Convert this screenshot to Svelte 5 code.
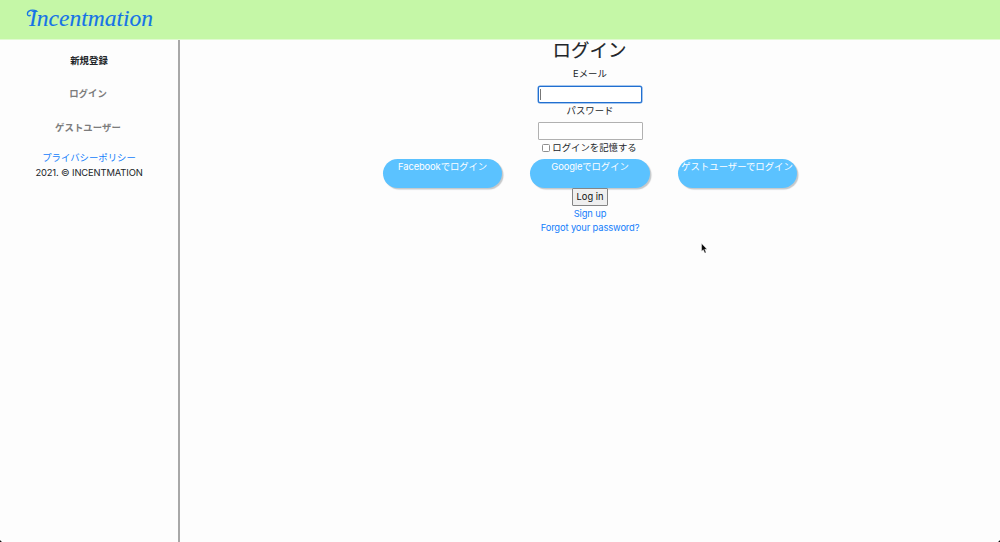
<script>
  const providers = ['Facebookでログイン', 'Googleでログイン', 'ゲストユーザーでログイン'];
</script>

<div class="page">
  <header>
    <svg class="logo" width="140" height="39" viewBox="0 0 140 39" role="img" aria-label="Incentmation">
      <path d="M11 11C6 9 1.4 10.5 1.4 14C1.4 16 3.5 16.3 4.6 15" />
      <text x="3" y="25.5" textLength="124" lengthAdjust="spacingAndGlyphs">Incentmation</text>
    </svg>
  </header>
  <div class="body">
    <nav>
      <a class="item active" href="#new">新規登録</a>
      <a class="item" href="#login">ログイン</a>
      <a class="item guest" href="#guest">ゲストユーザー</a>
      <a class="policy" href="#policy">プライバシーポリシー</a>
      <span class="copy">2021. © INCENTMATION</span>
    </nav>
    <main>
      <h1>ログイン</h1>
      <label class="email" for="email">Eメール</label>
      <div class="field focused" id="email"><i></i></div>
      <label class="pass" for="password">パスワード</label>
      <div class="field second" id="password"></div>
      <div class="remember"><span class="box"></span><span>ログインを記憶する</span></div>
      <div class="providers">
        {#each providers as p}
          <a href="#login"><span>{p}</span></a>
        {/each}
      </div>
      <button>Log in</button>
      <a class="link signup" href="#signup">Sign up</a>
      <a class="link" href="#forgot">Forgot your password?</a>
    </main>
  </div>
  <svg class="cursor" width="7" height="11" viewBox="0 0 7 11"><path d="M.6.6V8.2L2.3 6.7L3.8 10L5.1 9.4L3.7 6.2H6Z" /></svg>
  <i class="corner left"></i>
  <i class="corner right"></i>
</div>

<style>
  :global(body) { margin: 0; background: #fdfdfd; }
  .page {
    position: relative; width: 1000px; height: 542px; overflow: hidden;
    display: flex; flex-direction: column; background: #fdfdfd; color: #212529;
    font: 9.4px/14px Inter, "Noto Sans CJK JP", sans-serif;
  }
  a { color: #147efb; text-decoration: none; white-space: nowrap; }
  header { height: 39px; flex: none; background: #c5f7a7; border-bottom: 1px solid #e1fad1; box-sizing: content-box; }
  .logo { display: block; margin-left: 26px; }
  .logo text { font: italic 24px "Liberation Serif", serif; fill: #1673e6; stroke: #1673e6; stroke-width: .15; }
  .logo path { fill: none; stroke: #1673e6; stroke-width: 1.3; }
  .body { flex: 1; display: flex; }
  nav {
    width: 178px; border-right: 2px solid #a8a8a8; box-sizing: content-box;
    display: flex; flex-direction: column; align-items: center;
  }
  .item { height: 14px; margin-top: 19px; color: #7c7c7c; font-weight: 700; letter-spacing: .05px; }
  .item:first-child { margin-top: 14px; }
  .item.active { color: #202428; }
  .item:not(.active) { margin-right: 2px; }
  .item.guest { margin-top: 20px; }
  .policy { margin-top: 16px; }
  .copy { margin-top: 1px; white-space: nowrap; letter-spacing: -.13px; }
  main { flex: 1; display: flex; flex-direction: column; align-items: center; }
  h1 { margin: 0 1px 0 0; height: 21px; font-size: 18.5px; line-height: 21px; font-weight: 400; -webkit-text-stroke: .15px; }
  label { height: 14px; }
  .email { margin-top: 6px; }
  .field { box-sizing: border-box; width: 105px; height: 18px; margin: 5px 0 0; border: 1px solid #b1b1b1; border-radius: 1px; background: #fff; }
  .focused { width: 104px; height: 17px; margin-bottom: 1px; border: 1px solid #216fd0; border-radius: 2px; box-shadow: 0 0 0 .5px #4c8fe0; }
  .second { margin-top: 4px; margin-bottom: 1px; }
  .field i { display: block; width: 1px; height: 11px; margin: 2px 0 0 1px; background: #777; }
  .remember { display: flex; align-items: center; gap: 2px; height: 14px; margin-right: 1px; }
  .box { box-sizing: border-box; width: 8px; height: 8px; border: 1px solid #8e8e8e; border-radius: 1.5px; background: #fff; }
  .providers { display: flex; gap: 28px; margin-top: 4px; }
  .providers a {
    display: flex; justify-content: center; box-sizing: border-box; width: 119.5px; height: 29px; padding-top: 1px;
    border-radius: 15px; background: #5bc2ff; color: #fff; box-shadow: 1.5px 1.5px 1px #c5c8ca;
    letter-spacing: -.12px;
  }
  .providers a:last-child { letter-spacing: 0; }
  .providers a:last-child span { margin-right: 1px; }
  .providers span { height: 14px; }
  button {
    position: relative; box-sizing: border-box; width: 36px; height: 18px; padding: 0; border: 1px solid #858585;
    border-radius: 1px; background: #efefef; color: #111; font: 9.3px/14px Inter, sans-serif; white-space: nowrap;
  }
  .link { height: 14px; letter-spacing: -.14px; }
  .signup { margin-top: 1px; }
  .cursor { position: absolute; left: 701px; top: 243px; }
  .cursor path { fill: #050505; stroke: #fff; stroke-width: .4; }
  .corner { position: absolute; bottom: 0; width: 3px; height: 3px; }
  .left { left: 0; background: radial-gradient(circle at 100% 0, transparent 2.7px, #111 3.2px); }
  .right { right: 0; background: radial-gradient(circle at 0 0, transparent 2.7px, #111 3.2px); }
</style>
